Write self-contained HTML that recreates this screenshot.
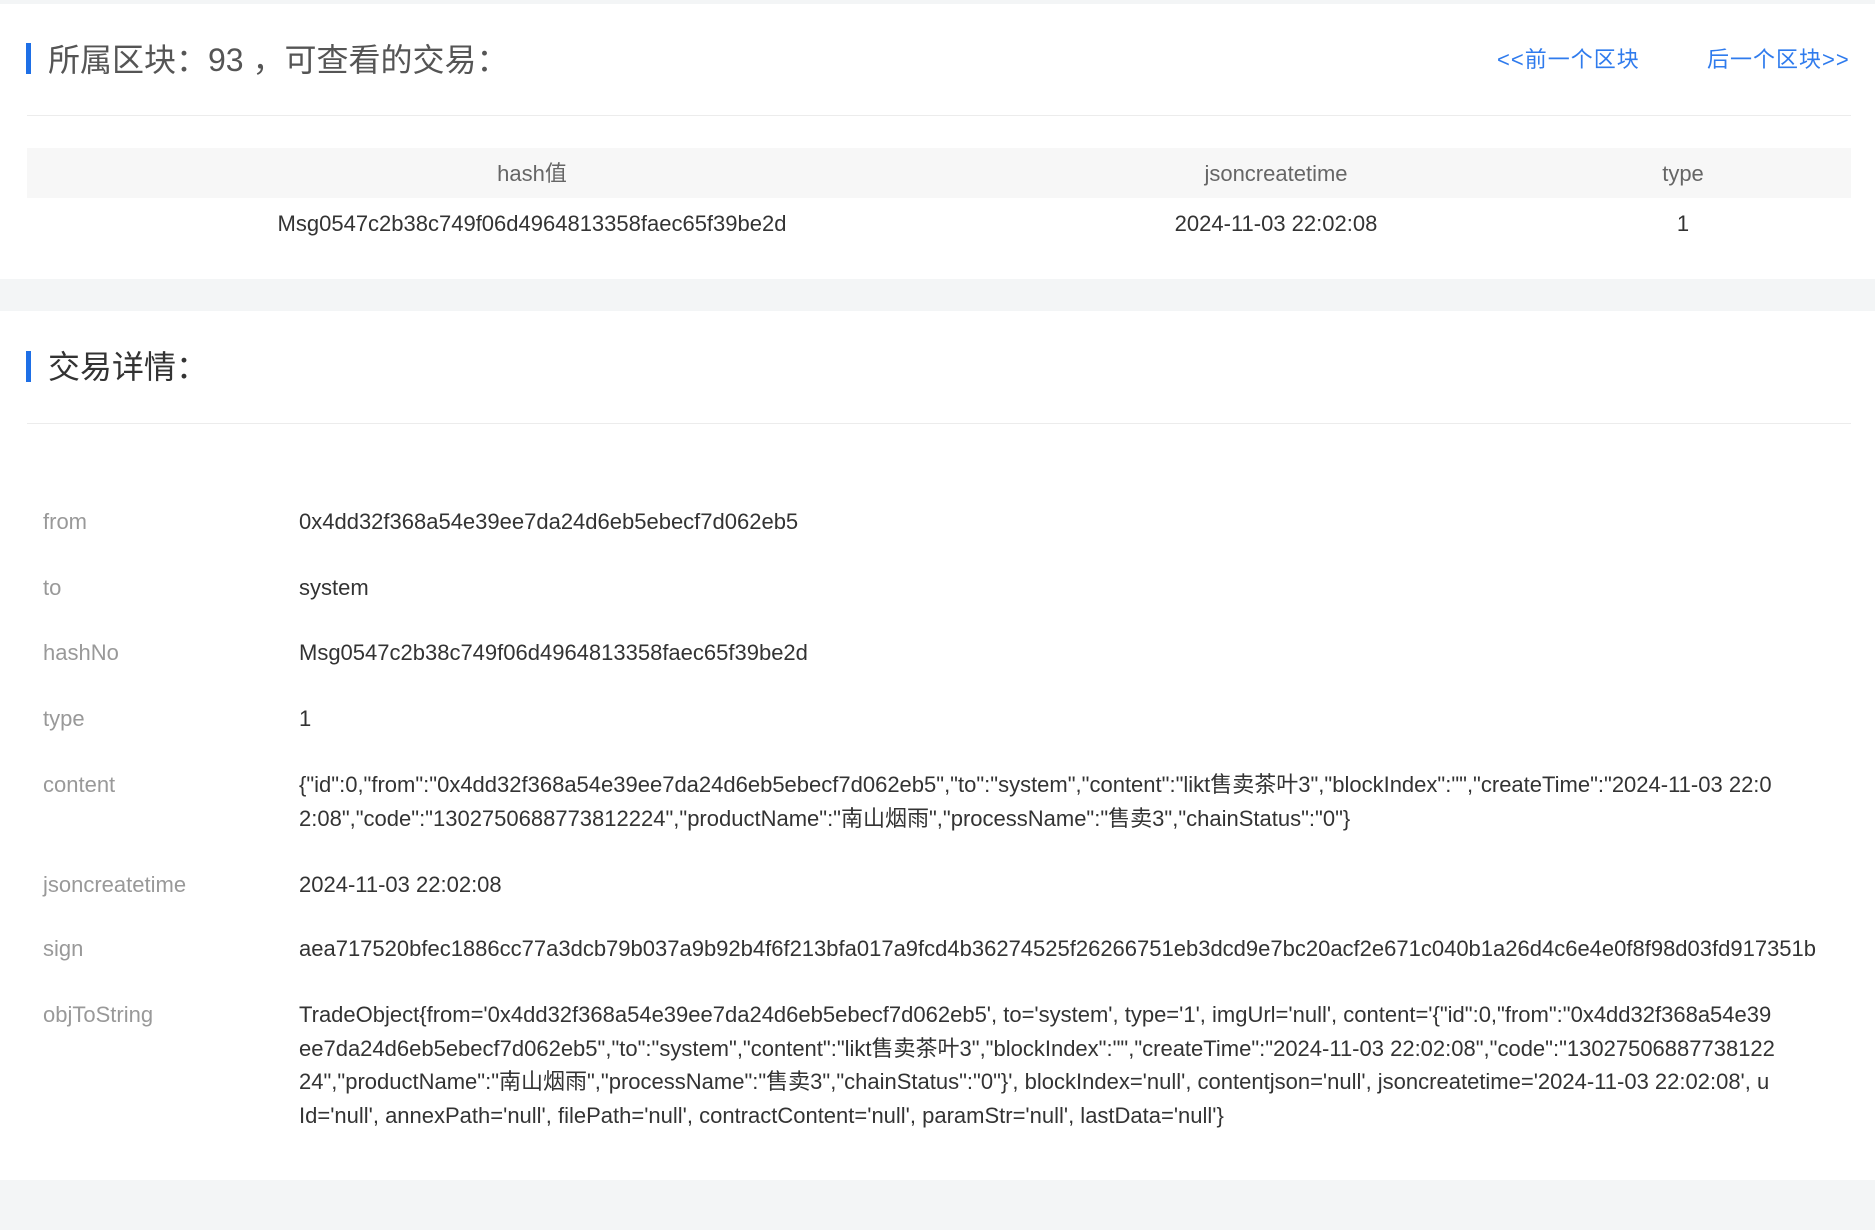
<!DOCTYPE html>
<html><head><meta charset="utf-8"><style>
*{margin:0;padding:0;box-sizing:border-box}
body{width:1875px;height:1230px;background:#f3f5f6;font-family:"Liberation Sans","Noto Sans CJK SC",sans-serif;position:relative;overflow:hidden}
.card{position:absolute;left:0;width:1875px;background:#fff}
.bar{position:absolute;left:26px;width:5px;background:#1e6fe6}
.title{position:absolute;left:48px;font-size:32px;color:#555;line-height:38px;white-space:nowrap}
.hr{position:absolute;left:27px;width:1824px;height:1px;background:#ececec}
.link{position:absolute;top:47px;font-size:22px;color:#2f7bed;letter-spacing:1px;line-height:26px;white-space:nowrap}
.th{position:absolute;top:148px;left:27px;width:1824px;height:50px;background:#f7f7f7}
.c{position:absolute;text-align:center;font-size:22px;line-height:26px}
.lab{position:absolute;left:43px;font-size:22px;color:#999;line-height:34px}
.val{position:absolute;left:299px;width:1560px;font-size:22px;color:#333;line-height:33.6px;white-space:nowrap}
</style></head><body>
<div class="card" style="top:4px;height:275px"></div>
<div class="card" style="top:311px;height:869px"></div>

<div class="bar" style="top:43px;height:31px"></div>
<div class="title" style="top:41px">所属区块：93 ，可查看的交易：</div>
<div class="link" style="left:1497px">&lt;&lt;前一个区块</div>
<div class="link" style="left:1707px">后一个区块&gt;&gt;</div>
<div class="hr" style="top:115px"></div>
<div class="th"></div>
<div class="c" style="left:27px;width:1010px;top:161px;color:#666">hash值</div>
<div class="c" style="left:1037px;width:478px;top:161px;color:#666">jsoncreatetime</div>
<div class="c" style="left:1515px;width:336px;top:161px;color:#666">type</div>
<div class="c" style="left:27px;width:1010px;top:211px;color:#333">Msg0547c2b38c749f06d4964813358faec65f39be2d</div>
<div class="c" style="left:1037px;width:478px;top:211px;color:#333">2024-11-03 22:02:08</div>
<div class="c" style="left:1515px;width:336px;top:211px;color:#333">1</div>

<div class="bar" style="top:351px;height:31px"></div>
<div class="title" style="top:348px;color:#333">交易详情：</div>
<div class="hr" style="top:423px"></div>

<div class="lab" style="top:505px">from</div><div class="val" style="top:505px">0x4dd32f368a54e39ee7da24d6eb5ebecf7d062eb5</div>
<div class="lab" style="top:571px">to</div><div class="val" style="top:571px">system</div>
<div class="lab" style="top:636px">hashNo</div><div class="val" style="top:636px">Msg0547c2b38c749f06d4964813358faec65f39be2d</div>
<div class="lab" style="top:702px">type</div><div class="val" style="top:702px">1</div>
<div class="lab" style="top:768px">content</div><div class="val" style="top:768px">{"id":0,"from":"0x4dd32f368a54e39ee7da24d6eb5ebecf7d062eb5","to":"system","content":"likt售卖茶叶3","blockIndex":"","createTime":"2024-11-03 22:0<br>2:08","code":"1302750688773812224","productName":"南山烟雨","processName":"售卖3","chainStatus":"0"}</div>
<div class="lab" style="top:868px">jsoncreatetime</div><div class="val" style="top:868px">2024-11-03 22:02:08</div>
<div class="lab" style="top:932px">sign</div><div class="val" style="top:932px">aea717520bfec1886cc77a3dcb79b037a9b92b4f6f213bfa017a9fcd4b36274525f26266751eb3dcd9e7bc20acf2e671c040b1a26d4c6e4e0f8f98d03fd917351b</div>
<div class="lab" style="top:998px">objToString</div><div class="val" style="top:998px">TradeObject{from='0x4dd32f368a54e39ee7da24d6eb5ebecf7d062eb5', to='system', type='1', imgUrl='null', content='{"id":0,"from":"0x4dd32f368a54e39<br>ee7da24d6eb5ebecf7d062eb5","to":"system","content":"likt售卖茶叶3","blockIndex":"","createTime":"2024-11-03 22:02:08","code":"13027506887738122<br>24","productName":"南山烟雨","processName":"售卖3","chainStatus":"0"}', blockIndex='null', contentjson='null', jsoncreatetime='2024-11-03 22:02:08', u<br>Id='null', annexPath='null', filePath='null', contractContent='null', paramStr='null', lastData='null'}</div>
</body></html>
